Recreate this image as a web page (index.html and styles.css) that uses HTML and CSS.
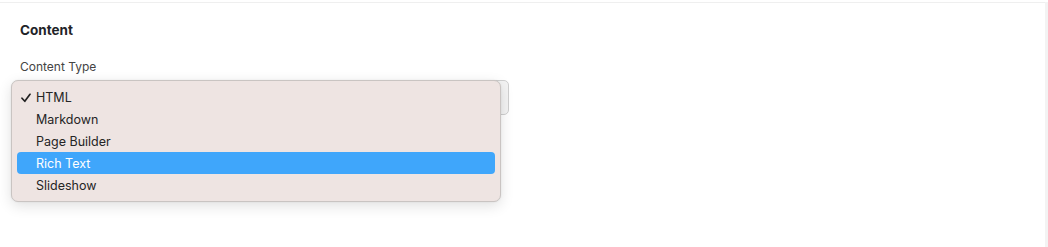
FILE: index.html
```html
<!DOCTYPE html>
<html>
<head>
<meta charset="utf-8">
<link rel="stylesheet" href="styles.css">
</head>
<body>
<div class="page">
  <div class="panel">
    <h2 class="title">Content</h2>
    <div class="field">
      <label class="label">Content Type</label>
      <div class="select-wrap">
        <div class="select"></div>
        <ul class="menu">
          <li class="item checked"><svg class="check" width="10" height="10" viewBox="0 0 10 10"><path d="M1 5.2 L3.8 8.3 L9 1.3" fill="none" stroke="#222" stroke-width="1.7" stroke-linecap="round" stroke-linejoin="round"/></svg>HTML</li>
          <li class="item">Markdown</li>
          <li class="item">Page Builder</li>
          <li class="item active">Rich Text</li>
          <li class="item">Slideshow</li>
        </ul>
      </div>
    </div>
  </div>
  <div class="edge"></div>
</div>
</body>
</html>
```
FILE: styles.css
```css
* { box-sizing: border-box; }
html, body { margin: 0; padding: 0; background: #fff; }
body {
  font-family: Inter, "Liberation Sans", sans-serif;
  color: #222;
  width: 1048px;
  height: 247px;
  overflow: hidden;
}
.page {
  display: flex;
  height: 247px;
  padding-top: 2px;
}
.panel {
  flex: 1;
  border-top: 1px solid #efefef;
  padding: 0 20px;
}
.edge {
  width: 3px;
  background: #f3f3f3;
}
.title {
  margin: 19px 0 0;
  font-size: 13.5px;
  font-weight: 700;
  line-height: 16px;
  color: #1f2328;
}
.field { margin-top: 21px; }
.label {
  display: block;
  font-size: 12px;
  line-height: 16px;
  color: #444;
}
.select-wrap {
  position: relative;
  margin-top: 5px;
  width: 489px;
}
.select {
  height: 35px;
  border: 1px solid #cfcfcf;
  border-radius: 5px;
  background: #f3f3f3;
}
.menu {
  position: absolute;
  left: -9px;
  top: 0;
  width: 490px;
  margin: 0;
  padding: 5px;
  list-style: none;
  background: #eee4e2;
  border: 1px solid #c9c4c2;
  border-radius: 7px;
  box-shadow: 0 4px 14px rgba(0,0,0,0.12), 0 0 2px rgba(0,0,0,0.08);
}
.item {
  position: relative;
  height: 22px;
  padding-top: 2px;
  line-height: 20px;
  padding-left: 19px;
  font-size: 12.5px;
  color: #252525;
  border-radius: 4px;
}
.check {
  position: absolute;
  left: 4px;
  top: 7px;
}
.active {
  background: #3fa6fb;
  color: #fff;
}
```
